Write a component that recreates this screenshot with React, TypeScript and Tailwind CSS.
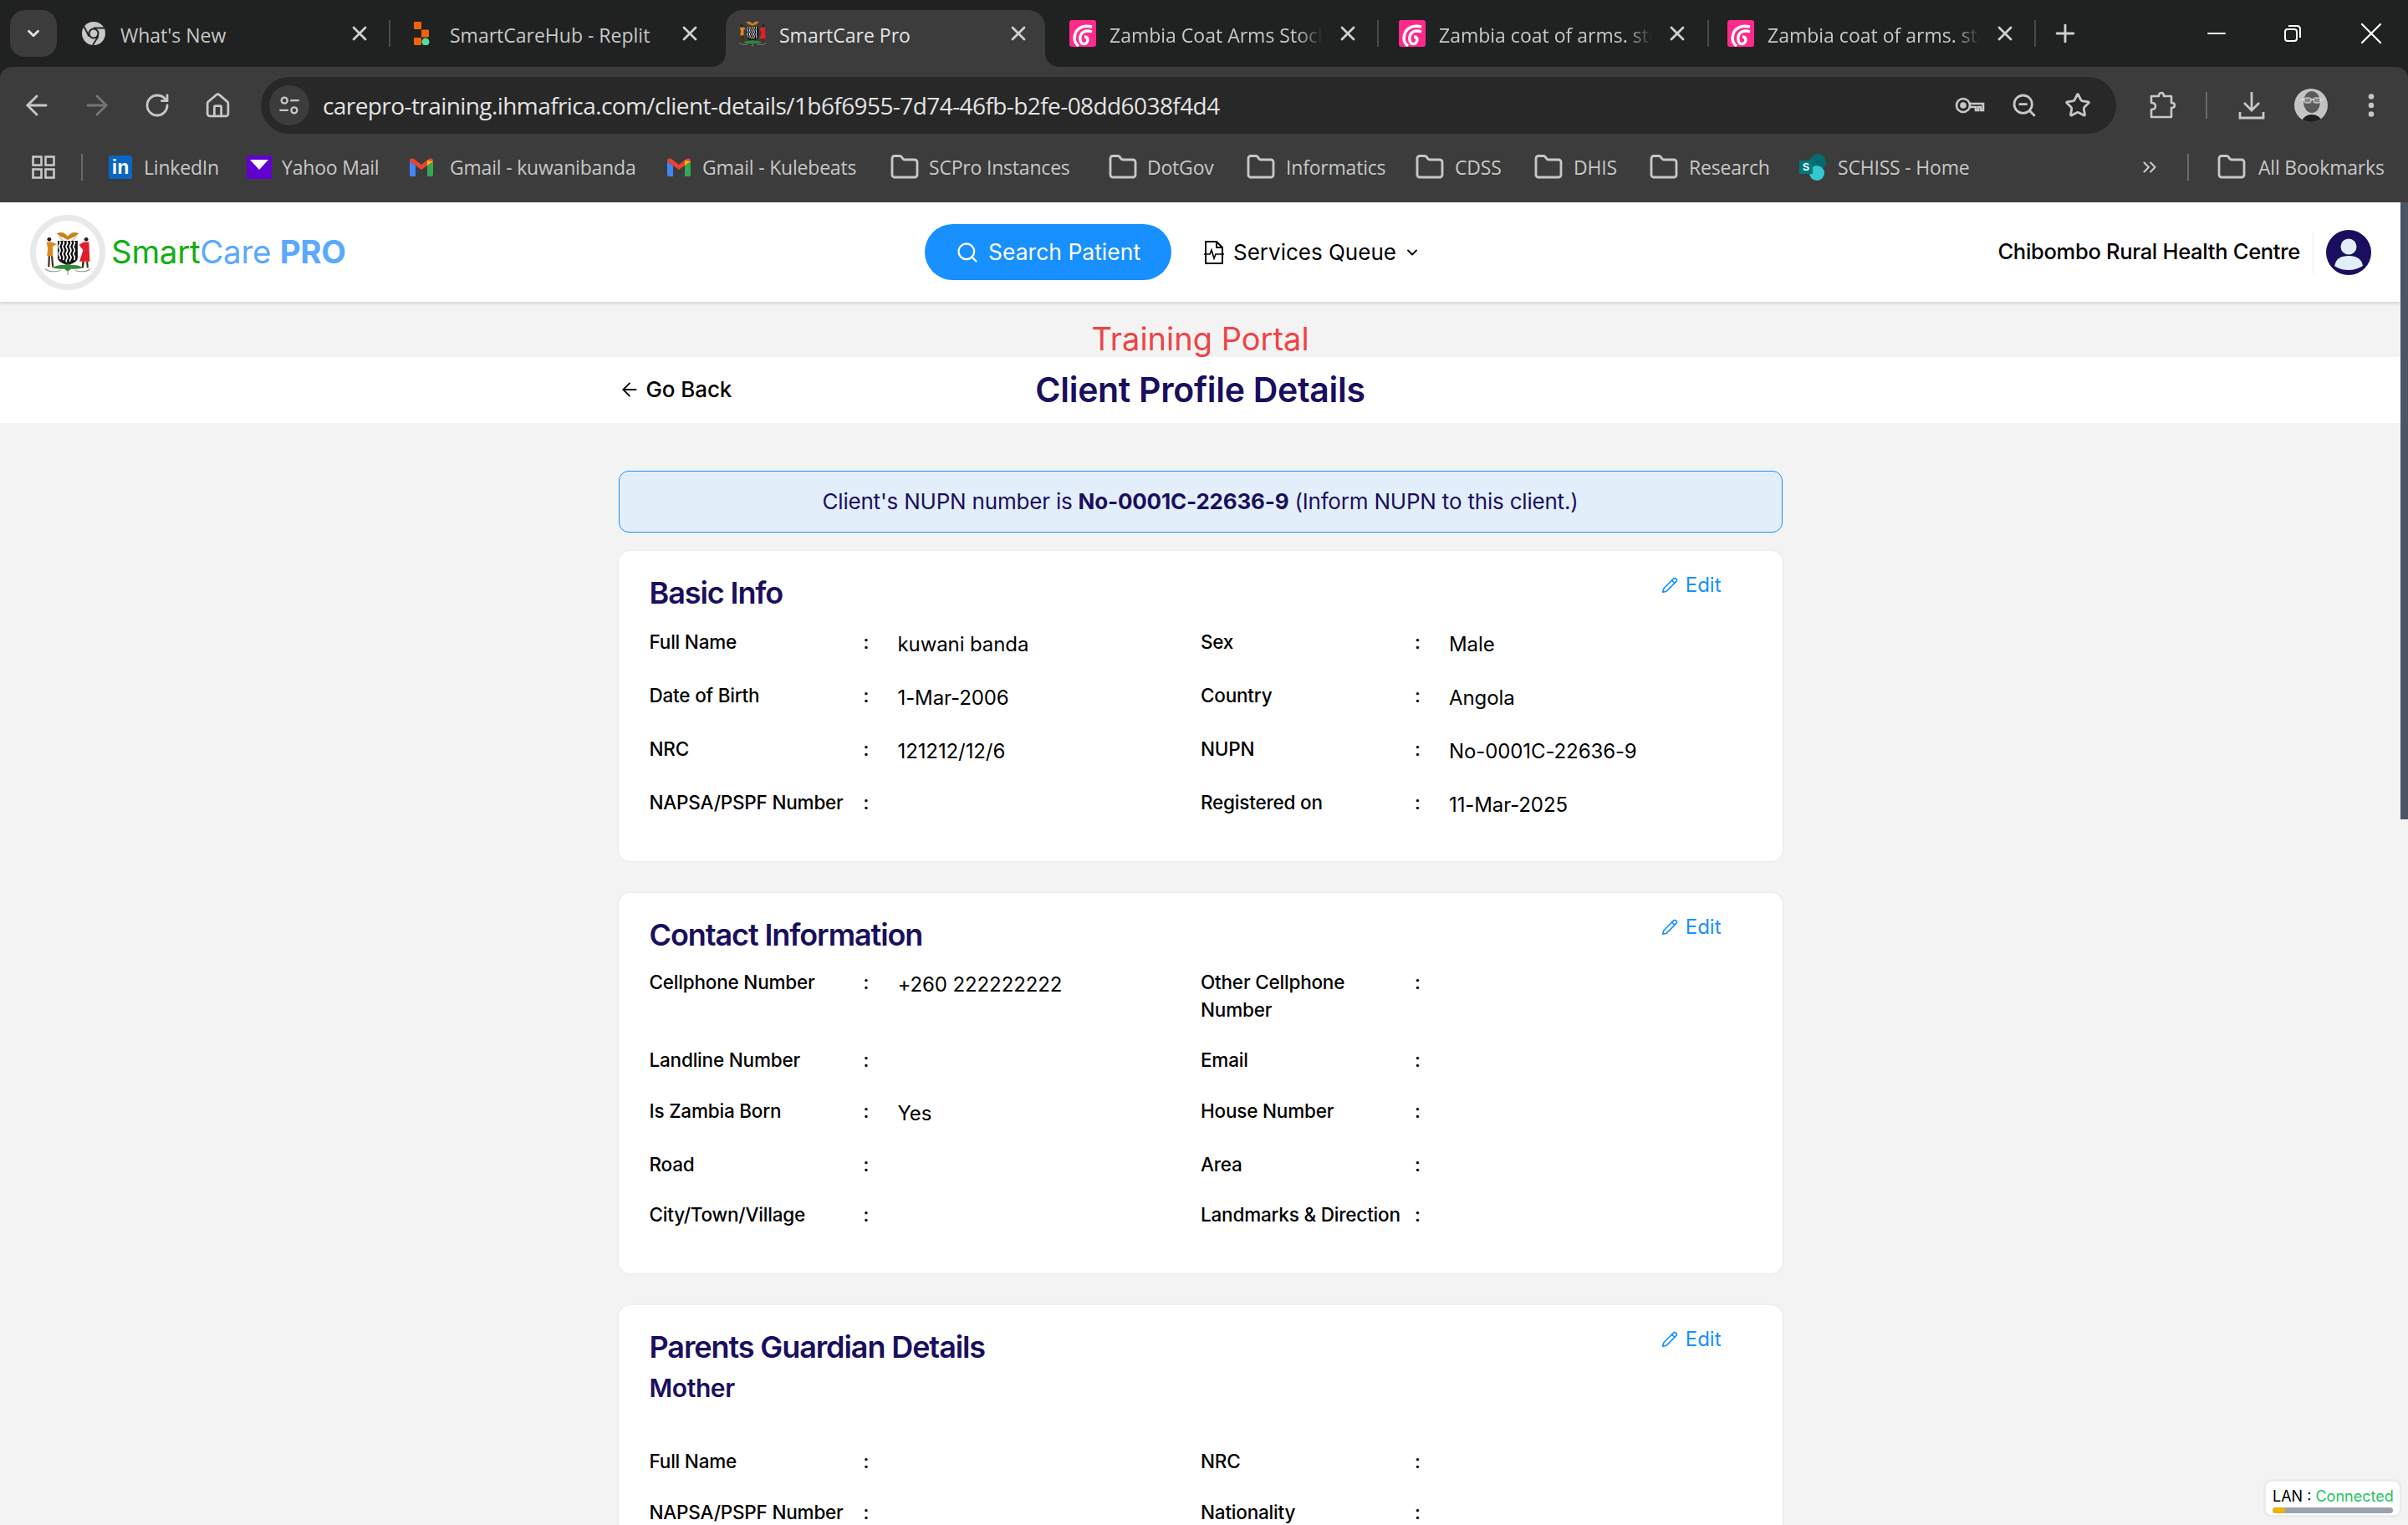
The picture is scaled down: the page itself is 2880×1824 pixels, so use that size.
import { ArrowLeft, ArrowRight, ChevronDown, ChevronsRight, Folder, Home, Minus, MoreVertical, Pencil, Plus, RotateCw, Search, Star, X, ZoomOut } from "lucide-react";

const POP = "font-['Inter','Liberation_Sans',sans-serif]";
const UI = "font-['Open_Sans','Noto_Sans',sans-serif]";

const CoatOfArms = ({ className }: { className: string }) => (
	<svg viewBox="0 0 100 100" className={className}>
		{/* eagle */}
		<path d="M25 8 Q38 2 46 10 L50 14 L54 10 Q62 2 75 8 Q66 16 58 18 L50 22 L42 18 Q34 16 25 8Z" fill="#c9811c" />
		<path d="M30 14 L42 26 M70 14 L58 26" stroke="#777" strokeWidth="1.5" />
		{/* shield */}
		<path d="M28 24 H72 V62 Q72 72 50 78 Q28 72 28 62Z" fill="#111" />
		<path d="M32 25 q3 4 0 8 t0 8 t0 8 t0 8 t1 8 M40 25 q3 4 0 8 t0 8 t0 8 t0 8 t0 10 M48 25 q3 4 0 8 t0 8 t0 8 t0 8 t0 8 t0 6 M56 25 q3 4 0 8 t0 8 t0 8 t0 8 t0 8 t0 5 M64 25 q3 4 0 8 t0 8 t0 8 t0 8 t0 10" stroke="#fff" strokeWidth="3" fill="none" />
		{/* left figure */}
		<circle cx="9" cy="21" r="4.5" fill="#2b1a12" />
		<path d="M3 27 H15 L26 32 L17 36 V58 H4 L6 42Z" fill="#d98a1f" />
		<path d="M7 58 L6 82 H10 L11 58Z M13 58 L15 82 H19 L17 58Z" fill="#4a2a18" />
		{/* right figure */}
		<circle cx="91" cy="21" r="4.5" fill="#2b1a12" />
		<path d="M85 27 H97 L99 70 H76 L84 45 L75 33Z" fill="#e01f2d" />
		<path d="M82 70 L81 84 H85 L87 70Z M91 70 L92 84 H96 L95 70Z" fill="#4a2a18" />
		{/* base */}
		<path d="M14 84 Q30 76 42 78 L50 74 L58 78 Q70 76 86 84 Q70 88 58 86 L50 92 L42 86 Q30 88 14 84Z" fill="#2f8a3c" />
		<path d="M0 86 Q12 96 34 90 M66 90 Q88 96 100 86 M50 92 V100" stroke="#999" strokeWidth="2" fill="none" />
	</svg>
);

const ChromeLogo = () => (
	<svg viewBox="0 0 24 24" className="h-[28px] w-[28px]">
		<circle cx="12" cy="12" r="12" fill="#c7c7c7" />
		<circle cx="12" cy="12" r="5.6" fill="#202222" />
		<circle cx="12" cy="12" r="3.8" fill="#c7c7c7" />
		<path d="M12 6.4 H23 M7.2 15 L2.2 5 M16.8 15 L11 24" stroke="#202222" strokeWidth="1.6" />
	</svg>
);

const ReplitLogo = () => (
	<svg viewBox="0 0 20 28" className="h-[28px] w-[20px]">
		<rect x="0" y="0" width="9" height="9" rx="1" fill="#f26207" />
		<rect x="9" y="9.5" width="9" height="9" rx="1" fill="#f26207" />
		<rect x="0" y="19" width="9" height="9" rx="1" fill="#f26207" />
		<ellipse cx="14" cy="24" rx="4.5" ry="4.5" fill="#57d99a" />
	</svg>
);

const PinkLogo = () => (
	<svg viewBox="0 0 32 32" className="h-[32px] w-[32px]">
		<rect width="32" height="32" rx="3" fill="#ff2a8a" />
		<path d="M27 8 Q14 5 8 14 Q3 25 11 31 M27 14 Q18 11 14 17 Q11 23 15 28 Q21 30 22 24 Q22 20 18 20" stroke="#fff" strokeWidth="3.4" fill="none" />
	</svg>
);

const GmailLogo = () => (
	<svg viewBox="0 0 28 22" className="h-[22px] w-[28px]">
		<path d="M0 4 L7 9 V22 H2 Q0 22 0 20Z" fill="#4285f4" />
		<path d="M28 4 L21 9 V22 H26 Q28 22 28 20Z" fill="#34a853" />
		<path d="M0 4 Q0 -1 5 1 L14 8 L23 1 Q28 -1 28 4 L21 9 L14 14 L7 9Z" fill="#ea4335" />
		<path d="M21 3 L28 4 L21 9Z" fill="#fbbc04" />
	</svg>
);

const Tab = ({ icon, title, box, active, fade, divider }: { icon: React.ReactNode; title: string; box: string; active?: boolean; fade?: boolean; divider?: boolean }) => (
	<div className={`relative flex h-[68px] shrink-0 items-center pb-[8px] ${box} ${active ? "rounded-t-[20px] bg-[#3c3c3c]" : ""}`}>
		{active && <div className="absolute bottom-0 left-[-16px] h-[16px] w-[16px] bg-[radial-gradient(circle_at_0_0,transparent_15.5px,#3c3c3c_16px)]" />}
		{active && <div className="absolute bottom-0 right-[-16px] h-[16px] w-[16px] bg-[radial-gradient(circle_at_100%_0,transparent_15.5px,#3c3c3c_16px)]" />}
		<div className="mb-[4px] flex w-[32px] shrink-0 items-center justify-center">{icon}</div>
		<div className={`flex-1 overflow-hidden whitespace-nowrap text-[23px] ${active ? "text-[#e3e3e3]" : "text-[#c7c7c7]"} ${fade ? "[mask-image:linear-gradient(90deg,#000_88%,transparent)]" : ""}`}>{title}</div>
		<X className="mb-[4px] h-[28px] w-[28px] shrink-0 text-[#d0d0d0]" strokeWidth={2.4} />
		{divider && <div className="absolute bottom-[24px] right-0 top-[12px] w-[2px] bg-[#4a4a4a]" />}
	</div>
);

const Bookmark = ({ icon, title, box, gap }: { icon: React.ReactNode; title: string; box: string; gap: string }) => (
	<div className={`flex shrink-0 items-center ${box} ${gap}`}>
		{icon}
		<span className="whitespace-nowrap text-[23px] tracking-[-0.2px] text-[#c7c7c7]">{title}</span>
	</div>
);

const FolderIcon = () => <Folder className="h-[36px] w-[36px] shrink-0 text-[#c7c7c7]" strokeWidth={1.9} />;

const Field = ({ label, value }: { label: string; value?: string }) => (
	<div className="flex items-start">
		<div className="w-[256px] shrink-0 text-[22.5px] font-medium leading-[32.5px] tracking-[-0.2px] text-black">{label}</div>
		<div className="w-[41px] shrink-0 text-[22.5px] font-medium leading-[32.5px] text-black">:</div>
		<div className="pt-[2px] text-[24px] leading-[34px] tracking-[-0.1px] text-black">{value}</div>
	</div>
);

const Card = ({ title, children, box }: { title: string; children: React.ReactNode; box: string }) => (
	<div className={`rounded-[14px] bg-white pl-[37px] pr-[36px] pt-[23px] shadow-[0_0_3px_rgba(0,0,0,0.08)] ${box}`}>
		<div className="flex items-start justify-between pr-[37px]">
			<h2 className="text-[36px] font-semibold leading-[54px] tracking-[-1.1px] text-[#1a0f5e]">{title}</h2>
			<div className="flex items-center gap-[9px] text-[24px] leading-[36px] text-[#1890ff]">
				<Pencil className="h-[20px] w-[20px]" strokeWidth={2} />
				Edit
			</div>
		</div>
		{children}
	</div>
);

const Rows = ({ children, box }: { children: React.ReactNode; box: string }) => (
	<div className={`grid grid-cols-2 gap-y-[28px] ${box}`}>{children}</div>
);

const App = () => {
	return (
		<div className={`flex h-[1824px] w-[2880px] flex-col overflow-hidden bg-[#202222] ${UI}`}>
			{/* tab strip */}
			<div className="flex h-[80px] shrink-0 items-start pl-[12px] pt-[12px]">
				<div className="flex h-[56px] w-[56px] shrink-0 items-center justify-center rounded-[18px] bg-[#3c3c3c]">
					<ChevronDown className="h-[22px] w-[22px] text-[#e3e3e3]" strokeWidth={3} />
				</div>
				<Tab icon={<ChromeLogo />} title="What's New" box="ml-[14px] w-[385px] pl-[14px] pr-[23px] gap-[16px]" divider />
				<Tab icon={<ReplitLogo />} title="SmartCareHub - Replit" box="w-[401px] pl-[22px] pr-[29px] gap-[17px]" />
				<Tab icon={<CoatOfArms className="h-[32px] w-[32px]" />} title="SmartCare Pro" box="w-[382px] pl-[16px] pr-[18px] gap-[16px]" active />
				<Tab icon={<PinkLogo />} title="Zambia Coat Arms Stock" box="w-[399px] pl-[29px] pr-[23px] gap-[16px]" fade divider />
				<Tab icon={<PinkLogo />} title="Zambia coat of arms. stock" box="w-[395px] pl-[24px] pr-[24px] gap-[16px]" fade divider />
				<Tab icon={<PinkLogo />} title="Zambia coat of arms. stock" box="w-[391px] pl-[22px] pr-[23px] gap-[16px]" fade divider />
				<Plus className="ml-[18px] mt-[11px] h-[34px] w-[34px] text-[#d0d0d0]" strokeWidth={2} />
				<Minus className="ml-[147px] mt-[11px] h-[34px] w-[34px] text-white" strokeWidth={1.5} />
				<svg viewBox="0 0 22 22" className="ml-[63px] mt-[17px] h-[22px] w-[22px] text-white" fill="none" stroke="currentColor" strokeWidth="2">
					<rect x="2" y="6" width="14" height="14" rx="3" />
					<path d="M6 2 H16 Q20 2 20 6 V16" />
				</svg>
				<X className="ml-[61px] mt-[6px] h-[44px] w-[44px] text-white" strokeWidth={1.2} />
			</div>

			{/* toolbar */}
			<div className="flex h-[80px] shrink-0 items-start rounded-t-[14px] bg-[#3c3c3c] pl-[8px] pt-[12px]">
				<div className="flex h-[68px] w-[72px] items-center justify-center"><ArrowLeft className="h-[38px] w-[38px] text-[#c7c7c7]" strokeWidth={1.8} /></div>
				<div className="flex h-[68px] w-[72px] items-center justify-center"><ArrowRight className="h-[38px] w-[38px] text-[#757575]" strokeWidth={1.8} /></div>
				<div className="flex h-[68px] w-[72px] items-center justify-center"><RotateCw className="h-[32px] w-[32px] text-[#c7c7c7]" strokeWidth={2.1} /></div>
				<div className="flex h-[68px] w-[72px] items-center justify-center"><Home className="h-[33px] w-[33px] text-[#c7c7c7]" strokeWidth={2} /></div>
				<div className="ml-[16px] flex h-[68px] w-[2219px] shrink-0 items-center rounded-full bg-[#282828] pl-[10px] pr-[30px]">
					<div className="flex h-[48px] w-[48px] shrink-0 items-center justify-center rounded-full bg-[#3c3c3c]">
						<svg viewBox="0 0 24 24" className="h-[28px] w-[28px]" fill="none" stroke="#c7c7c7" strokeWidth="2">
							<circle cx="7" cy="7" r="3" />
							<path d="M13 7 H22 M2 17 H11" />
							<circle cx="17" cy="17" r="3" />
						</svg>
					</div>
					<div className="ml-[16px] flex-1 whitespace-nowrap text-[28px] tracking-[-0.58px] text-[#e3e3e3]">carepro-training.ihmafrica.com/client-details/1b6f6955-7d74-46fb-b2fe-08dd6038f4d4</div>
					<svg viewBox="0 0 36 22" className="h-[22px] w-[36px]" fill="none" stroke="#c7c7c7" strokeWidth="2.6">
						<circle cx="10" cy="11" r="8" />
						<circle cx="10" cy="11" r="2.5" fill="#c7c7c7" />
						<path d="M18 9 H34 V17 H31 V13 H28 V17 H25 V13 H18" />
					</svg>
					<ZoomOut className="ml-[31px] h-[32px] w-[32px] text-[#c7c7c7]" strokeWidth={2.1} />
					<Star className="ml-[32px] h-[32px] w-[32px] text-[#c7c7c7]" strokeWidth={2.1} />
				</div>
				<svg viewBox="0 0 32 34" className="ml-[39px] mt-[17px] h-[34px] w-[32px]" fill="none" stroke="#c7c7c7" strokeWidth="2.6">
					<path d="M3 6 H12 Q12 2 15 2 Q18 2 18 6 H27 V14 Q31 14 31 17 Q31 20 27 20 V31 H3 V22 Q8 22 8 18 Q8 14 3 14Z" strokeLinejoin="round" />
				</svg>
				<div className="ml-[36px] mt-[18px] h-[32px] w-[2px] bg-[#6a6a6a]" />
				<svg viewBox="0 0 32 34" className="ml-[37px] mt-[17px] h-[34px] w-[32px]" fill="none" stroke="#c7c7c7" strokeWidth="2.8">
					<path d="M16 1 V22 M7 14 L16 23 L25 14 M2 25 V32 H30 V25" />
				</svg>
				<div className="ml-[35px] mt-[14px] flex h-[40px] w-[40px] items-center justify-center overflow-hidden rounded-full bg-[#c4c4c4]">
					<svg viewBox="0 0 40 40" className="h-[40px] w-[40px]">
						<ellipse cx="21" cy="16" rx="10" ry="13" fill="#5a5a5a" />
						<path d="M8 13 H33" stroke="#e8e8e8" strokeWidth="1.5" />
						<rect x="12" y="11" width="8" height="6" rx="1.5" fill="#8a8a8a" stroke="#e8e8e8" strokeWidth="1" />
						<rect x="23" y="11" width="8" height="6" rx="1.5" fill="#8a8a8a" stroke="#e8e8e8" strokeWidth="1" />
						<path d="M8 40 Q12 31 21 31 Q30 31 34 40Z" fill="#1f1f1f" />
					</svg>
				</div>
				<MoreVertical className="ml-[34px] mt-[16px] h-[36px] w-[36px] text-[#c7c7c7]" strokeWidth={2.4} />
			</div>

			{/* bookmarks */}
			<div className="flex h-[82px] shrink-0 items-center bg-[#3c3c3c] pb-[2px] pl-[38px]">
				<svg viewBox="0 0 28 28" className="h-[28px] w-[28px] shrink-0" fill="none" stroke="#c7c7c7" strokeWidth="2.6">
					<rect x="1.5" y="1.5" width="10" height="10" />
					<rect x="16.5" y="1.5" width="10" height="10" />
					<rect x="1.5" y="16.5" width="10" height="10" />
					<rect x="16.5" y="16.5" width="10" height="10" />
				</svg>
				<div className="ml-[31px] mr-[31px] h-[32px] w-[2px] bg-[#6a6a6a]" />
				<Bookmark box="w-[165px]" gap="gap-[14px]" title="LinkedIn" icon={<div className="flex h-[28px] w-[28px] items-center justify-center rounded-[3px] bg-[#0a66c2] font-['Liberation_Sans'] text-[23px] font-bold text-white">in</div>} />
				<Bookmark box="w-[195px]" gap="gap-[12px]" title="Yahoo Mail" icon={<svg viewBox="0 0 30 28" className="h-[28px] w-[30px]"><rect width="30" height="28" fill="#6001d2" /><path d="M4 5 H26 L15 17Z" fill="#fff" /></svg>} />
				<Bookmark box="w-[308px]" gap="gap-[20px]" title="Gmail - kuwanibanda" icon={<GmailLogo />} />
				<Bookmark box="w-[266px]" gap="gap-[14px]" title="Gmail - Kulebeats" icon={<GmailLogo />} />
				<Bookmark box="w-[261px]" gap="gap-[11px]" title="SCPro Instances" icon={<FolderIcon />} />
				<Bookmark box="w-[165px]" gap="gap-[11px]" title="DotGov" icon={<FolderIcon />} />
				<Bookmark box="w-[202px]" gap="gap-[12px]" title="Informatics" icon={<FolderIcon />} />
				<Bookmark box="w-[142px]" gap="gap-[12px]" title="CDSS" icon={<FolderIcon />} />
				<Bookmark box="w-[138px]" gap="gap-[12px]" title="DHIS" icon={<FolderIcon />} />
				<Bookmark box="w-[180px]" gap="gap-[12px]" title="Research" icon={<FolderIcon />} />
				<Bookmark
					box="w-[364px]"
					gap="gap-[14px]"
					title="SCHISS - Home"
					icon={
						<div className="relative h-[32px] w-[32px]">
							<div className="absolute right-0 top-0 h-[20px] w-[20px] rounded-full bg-[#036c70]" />
							<div className="absolute bottom-0 right-[2px] h-[18px] w-[18px] rounded-full bg-[#37c6d0]" />
							<div className="absolute left-0 top-[8px] flex h-[16px] w-[16px] items-center justify-center bg-[#03787c] font-['Liberation_Sans'] text-[12px] font-bold text-white">S</div>
						</div>
					}
				/>
				<ChevronsRight className="ml-[42px] h-[26px] w-[26px] text-[#c7c7c7]" strokeWidth={2} />
				<div className="ml-[32px] mr-[33px] h-[32px] w-[2px] bg-[#6a6a6a]" />
				<Bookmark box="" gap="gap-[14px]" title="All Bookmarks" icon={<FolderIcon />} />
			</div>

			{/* page */}
			<div className={`relative flex min-h-0 flex-1 overflow-hidden bg-[#f3f3f3] ${POP}`}>
				<div className="w-[2871px] shrink-0">
					<header className="relative z-10 flex h-[119px] items-center bg-white pl-[36px] pr-[35px] shadow-[0_2px_4px_rgba(0,0,0,0.14)]">
						<div className="flex h-[90px] w-[90px] shrink-0 items-center justify-center rounded-full border-[7px] border-[#e9e9ec] bg-white">
							<CoatOfArms className="h-[54px] w-[54px]" />
						</div>
						<div className="mb-[2px] ml-[7px] w-[973px] whitespace-nowrap text-[38.5px] leading-[54px] tracking-[-0.3px]">
							<span className="text-[#13ae13]">Smart</span>
							<span className="text-[#5aa9ff]">Care </span>
							<span className="font-bold text-[#5aa9ff]">PRO</span>
						</div>
						<button className="flex h-[67px] w-[295px] shrink-0 items-center rounded-full bg-[#1890ff] pl-[37px] text-[26.5px] text-white">
							<Search className="h-[28px] w-[28px]" strokeWidth={2} />
							<span className="ml-[11px] whitespace-nowrap">Search Patient</span>
						</button>
						<svg viewBox="0 0 24 30" className="ml-[39px] h-[30px] w-[24px] shrink-0" fill="none" stroke="#000" strokeWidth="2">
							<path d="M2 2 H15 L22 9 V28 H2Z M15 2 V9 H22" />
							<path d="M0 17 H7 L9 12 L12 22 L14 17 H24" strokeWidth="1.6" />
						</svg>
						<span className="mb-[1px] ml-[11px] whitespace-nowrap text-[26px] text-black">Services Queue</span>
						<ChevronDown className="ml-[9px] h-[20px] w-[20px] shrink-0 text-black" strokeWidth={2.2} />
						<span className="ml-auto whitespace-nowrap text-[25.5px] font-medium tracking-[-0.3px] text-black">Chibombo Rural Health Centre</span>
						<div className="ml-[15px] h-[52px] w-px bg-[#eeeeee]" />
						<svg viewBox="0 0 54 54" className="ml-[15px] h-[54px] w-[54px] shrink-0">
							<circle cx="27" cy="27" r="27" fill="#1a0f5e" />
							<circle cx="27" cy="20" r="9.5" fill="#e3eefb" />
							<path d="M10 43 Q12 31 27 31 Q42 31 44 43 Q36 48 27 48 Q18 48 10 43Z" fill="#e3eefb" />
						</svg>
					</header>

					<div className="flex h-[66px] items-center justify-center pt-[22px] text-[38px] leading-[54px] text-[#ef4444]">Training Portal</div>

					<div className="h-[79px] bg-white">
						<div className="relative mx-auto flex h-full w-[1392px] items-center justify-center">
							<h1 className="text-[41px] font-semibold tracking-[-0.3px] text-[#1a0f5e]">Client Profile Details</h1>
							<div className="absolute left-0 top-[19px] flex items-center gap-[7px] text-[26px] font-medium leading-[39px] tracking-[-0.1px] text-black">
								<ArrowLeft className="h-[26px] w-[26px]" strokeWidth={1.7} />
								Go Back
							</div>
						</div>
					</div>

					<div className="mx-auto w-[1392px] pt-[57px]">
						<div className="flex h-[74px] items-center justify-center rounded-[12px] border-[1.5px] border-[#1890ff] bg-[#e3eefb] pb-[2px] text-[26px] tracking-[-0.2px] text-[#1a0f5e]">
							<span>Client's NUPN number is <b className="font-bold">No-0001C-22636-9</b> (Inform NUPN to this client.)</span>
						</div>

						<Card title="Basic Info" box="mt-[22px] h-[371px]">
							<Rows box="mt-[16px]">
								<Field label="Full Name" value="kuwani banda" />
								<Field label="Sex" value="Male" />
								<Field label="Date of Birth" value="1-Mar-2006" />
								<Field label="Country" value="Angola" />
								<Field label="NRC" value="121212/12/6" />
								<Field label="NUPN" value="No-0001C-22636-9" />
								<Field label="NAPSA/PSPF Number" />
								<Field label="Registered on" value="11-Mar-2025" />
							</Rows>
						</Card>

						<Card title="Contact Information" box="mt-[38px] h-[455px]">
							<Rows box="mt-[14px]">
								<Field label="Cellphone Number" value="+260 222222222" />
								<Field label="Other Cellphone Number" />
								<Field label="Landline Number" />
								<Field label="Email" />
								<Field label="Is Zambia Born" value="Yes" />
								<Field label="House Number" />
								<Field label="Road" />
								<Field label="Area" />
								<Field label="City/Town/Village" />
								<Field label="Landmarks & Direction" />
							</Rows>
						</Card>

						<Card title="Parents Guardian Details" box="mt-[38px] h-[400px]">
							<div className="text-[30px] font-semibold leading-[44px] tracking-[-0.4px] text-[#1a0f5e]">Mother</div>
							<Rows box="mt-[50px]">
								<Field label="Full Name" />
								<Field label="NRC" />
								<Field label="NAPSA/PSPF Number" />
								<Field label="Nationality" />
							</Rows>
						</Card>
					</div>
				</div>

				{/* scrollbar */}
				<div className="w-[9px] shrink-0 bg-[#f3f3f3]">
					<div className="h-[738px] bg-[#4b5563]" />
				</div>

				{/* connection badge */}
				<div className="absolute bottom-[9px] right-[7px] z-20 h-[46px] w-[166px] rounded-[10px] border-[3px] border-[#ebebeb] bg-white px-[8px] pt-[5px]">
					<div className="whitespace-nowrap text-[18px] font-normal leading-[26px] text-black">
						LAN : <span className="text-[#22c55e]">Connected</span>
					</div>
					<div className="h-[7px] overflow-hidden rounded-full bg-[#9ca3af]">
						<div className="h-full w-[15px] rounded-full bg-[#eab308]" />
					</div>
				</div>
			</div>
		</div>
	);
};

export default App;
